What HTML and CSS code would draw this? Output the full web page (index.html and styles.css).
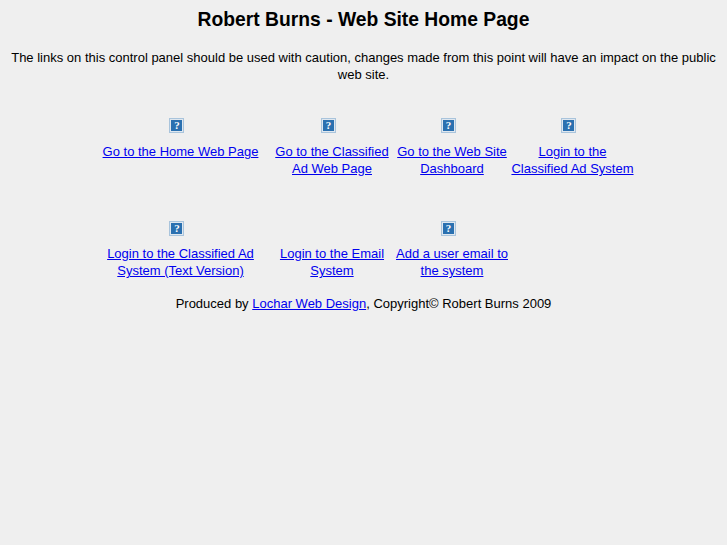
FILE: index.html
```html
<!DOCTYPE html>
<html lang="en">
<head>
  <meta charset="UTF-8">
  <title>Robert Burns - Web Site Home Page</title>
  <link rel="stylesheet" href="styles.css">
</head>
<body>
  <h1>Robert Burns - Web Site Home Page</h1>
  <p class="intro">The links on this control panel should be used with caution, changes made from this point will have an impact on the public web site.</p>

  <table class="panel">
    <tr>
      <td class="col1"><span class="icon">?</span>&nbsp;&nbsp;<br><a href="#">Go to the Home Web Page</a></td>
      <td class="col2"><span class="icon">?</span>&nbsp;&nbsp;<br><a href="#">Go to the Classified Ad Web Page</a></td>
      <td class="col3"><span class="icon">?</span>&nbsp;&nbsp;<br><a href="#">Go to the Web Site Dashboard</a></td>
      <td class="col4"><span class="icon">?</span>&nbsp;&nbsp;<br><a href="#">Login to the Classified Ad System</a></td>
    </tr>
    <tr class="last">
      <td><span class="icon">?</span>&nbsp;&nbsp;<br><a href="#">Login to the Classified Ad System (Text Version)</a></td>
      <td><a href="#">Login to the Email System</a></td>
      <td><span class="icon">?</span>&nbsp;&nbsp;<br><a href="#">Add a user email to the system</a></td>
      <td></td>
    </tr>
  </table>

  <p class="footer">Produced by <a href="#">Lochar Web Design</a>, Copyright© Robert Burns 2009</p>
</body>
</html>
```

FILE: styles.css
```css
body {
  margin: 8px;
  background-color: #efefef;
  color: #000;
  font-family: "Liberation Sans", Arial, sans-serif;
  font-size: 13px;
  line-height: 17px;
  text-align: center;
}

h1 {
  margin: 2px 0 19px 0;
  font-size: 19.3px;
  line-height: 20px;
}

p {
  margin: 0;
}

a {
  color: #0000ee;
}

.intro {
  margin-bottom: 35px;
}

.panel {
  width: 544px;
  margin-left: 82px;
  table-layout: fixed;
  border-collapse: collapse;
}

.panel td {
  padding: 0 0 44px 0;
  vertical-align: top;
  text-align: center;
}

.panel .last td {
  padding-bottom: 16px;
  vertical-align: bottom;
}

.col1 { width: 181px; }
.col2 { width: 122px; }
.col3 { width: 118px; }
.col4 { width: 123px; }

.icon {
  display: inline-block;
  box-sizing: border-box;
  width: 15px;
  height: 15px;
  margin-bottom: 10px;
  border: 1px solid #a9c4dc;
  outline: 1px solid #dfe7ef;
  outline-offset: -2px;
  background-color: #2a70b0;
  color: #fff;
  font-family: "Liberation Serif", serif;
  font-size: 11px;
  font-weight: bold;
  line-height: 13px;
  vertical-align: top;
}

.last .icon {
  margin-bottom: 9px;
}
```
